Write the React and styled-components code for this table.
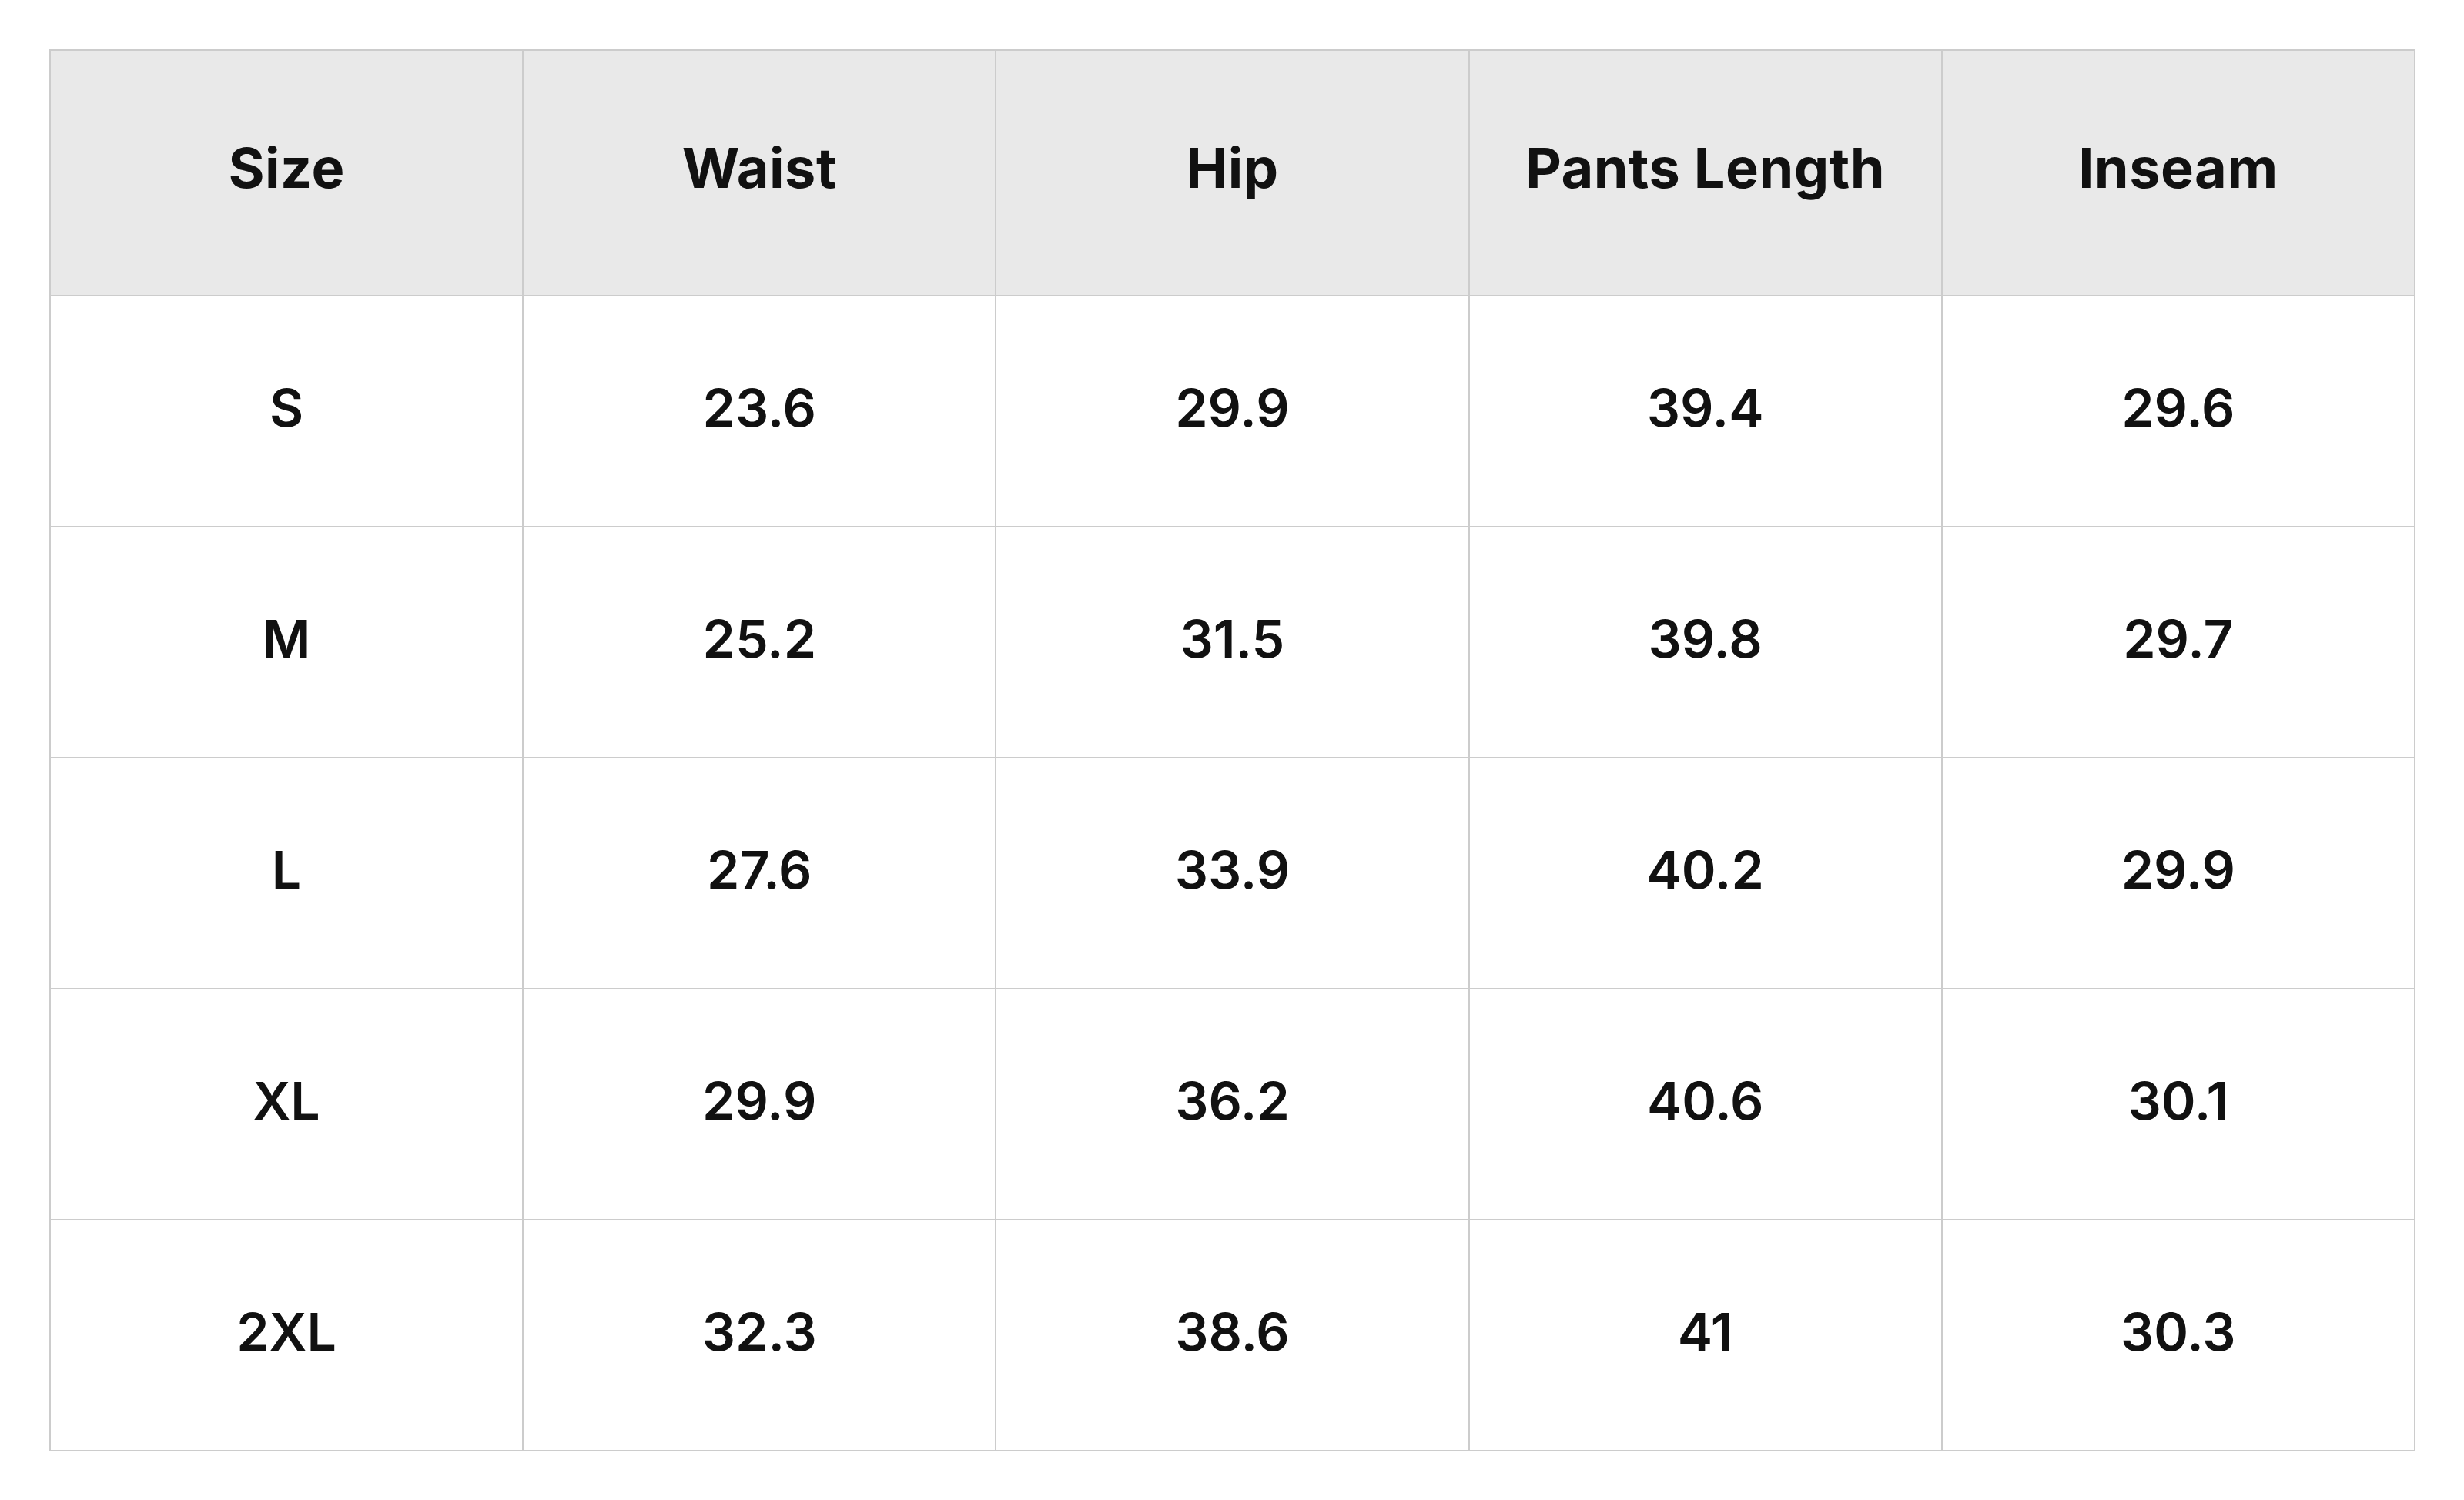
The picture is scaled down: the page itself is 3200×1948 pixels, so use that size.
import React from "react";
import styled, { createGlobalStyle } from "styled-components";

const GlobalStyle = createGlobalStyle`
  html, body {
    margin: 0;
    padding: 0;
    background: #ffffff;
  }
  body {
    font-family: Inter, "Noto Sans", "Liberation Sans", sans-serif;
    color: #111111;
  }
`;

const columns = ["Size", "Waist", "Hip", "Pants Length", "Inseam"];

const rows = [
  ["S", "23.6", "29.9", "39.4", "29.6"],
  ["M", "25.2", "31.5", "39.8", "29.7"],
  ["L", "27.6", "33.9", "40.2", "29.9"],
  ["XL", "29.9", "36.2", "40.6", "30.1"],
  ["2XL", "32.3", "38.6", "41", "30.3"],
];

const Page = styled.div`
  padding: 64px 63px 64px 64px;
`;

const Table = styled.table`
  width: 100%;
  border-collapse: collapse;
  table-layout: fixed;
  border: 2px solid #cccccc;
`;

const HeadCell = styled.th`
  height: 303px;
  background: #e9e9e9;
  border: 2px solid #cccccc;
  font-size: 72px;
  font-weight: 700;
  text-align: center;
  vertical-align: middle;
  letter-spacing: 0.5px;
  padding: 0 0 14px;
`;

const Cell = styled.td`
  height: 288px;
  border: 2px solid #cccccc;
  font-size: 68px;
  font-weight: 600;
  text-align: center;
  vertical-align: middle;
  padding: 0 0 10px;
`;

export default function App() {
  return (
    <Page>
      <GlobalStyle />
      <Table>
        <thead>
          <tr>
            {columns.map((c) => (
              <HeadCell key={c}>{c}</HeadCell>
            ))}
          </tr>
        </thead>
        <tbody>
          {rows.map((r) => (
            <tr key={r[0]}>
              {r.map((v, i) => (
                <Cell key={i}>{v}</Cell>
              ))}
            </tr>
          ))}
        </tbody>
      </Table>
    </Page>
  );
}
